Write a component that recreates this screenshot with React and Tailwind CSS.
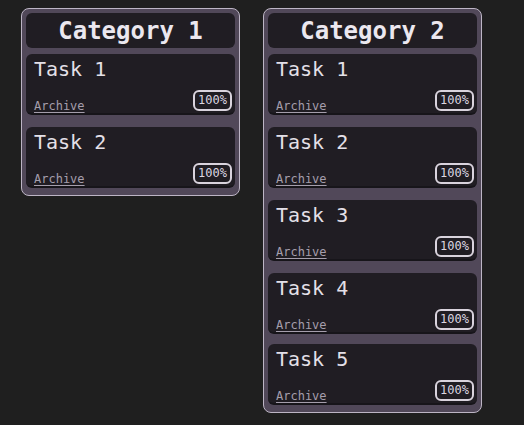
import React from "react";

const categories = [
  { name: "Category 1", tasks: ["Task 1", "Task 2"] },
  { name: "Category 2", tasks: ["Task 1", "Task 2", "Task 3", "Task 4", "Task 5"] },
];

const gaps = ["", "mt-3", "mt-3", "mt-3", "mt-[10px]"];

function TaskCard({ title, className }) {
  return (
    <div
      className={
        "h-[61px] rounded-md bg-[#201d23] border-b-2 border-[#17151a] pl-2 pr-[3px] pt-[1px] pb-[2px] flex flex-col justify-between " +
        className
      }
    >
      <div className="text-[20px] leading-[28px] text-[#e4e0e8]">{title}</div>
      <div className="flex items-end justify-between">
        <a className="text-[12px] leading-[10px] text-[#a59eac] underline underline-offset-2 cursor-pointer">
          Archive
        </a>
        <span className="border-2 border-[#d9d3dd] rounded-md px-[3px] text-[12px] leading-[17px] text-[#dcd6e0]">
          100%
        </span>
      </div>
    </div>
  );
}

function Category({ name, tasks }) {
  return (
    <div className="w-[219px] rounded-lg border border-[#bdb5c5] bg-[#514859] px-[4px] pt-[4px] pb-[7px]">
      <div className="h-[35px] rounded-md bg-[#201d23] flex items-center justify-center text-[24px] font-bold text-[#ebe7ef]">
        {name}
      </div>
      <div className="mt-[6px] flex flex-col">
        {tasks.map((t, i) => (
          <TaskCard key={t} title={t} className={gaps[i]} />
        ))}
      </div>
    </div>
  );
}

export default function App() {
  return (
    <div className="min-h-screen bg-[#1f1f1f] font-['DejaVu_Sans_Mono',monospace] flex items-start gap-[23px] pl-[21px] pt-[8px]">
      {categories.map((c) => (
        <Category key={c.name} name={c.name} tasks={c.tasks} />
      ))}
    </div>
  );
}
